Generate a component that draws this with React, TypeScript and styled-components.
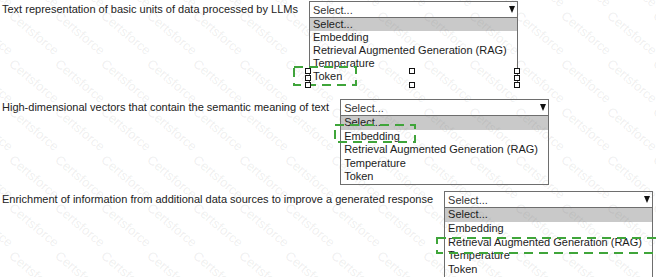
import React from 'react';
import styled, { createGlobalStyle } from 'styled-components';

const OPTIONS = [
  'Select...',
  'Embedding',
  'Retrieval Augmented Generation (RAG)',
  'Temperature',
  'Token',
];

const QUESTIONS = [
  { label: 'Text representation of basic units of data processed by LLMs', top: 1, row: 13, open: true },
  { label: 'High-dimensional vectors that contain the semantic meaning of text', top: 15, row: 13.5, open: false },
  { label: 'Enrichment of information from additional data sources to improve a generated response', top: 6.5, row: 13.75, open: false },
];

// green dashed answer marks and the leftover resize handles
const MARKS = [
  { left: 293, top: 66, width: 64, height: 20 },
  { left: 334, top: 124, width: 82, height: 19 },
  { left: 436, top: 237, width: 230, height: 17 },
];

const HANDLES = [
  [305, 68], [305, 75], [305, 82],
  [409, 68], [409, 82],
  [514, 68], [514, 75], [514, 82],
];

const GlobalStyle = createGlobalStyle`
  body {
    margin: 0;
    background: #fff;
    font-family: 'Liberation Sans', Arial, sans-serif;
  }
`;

const Page = styled.div`
  position: relative;
  width: 656px;
  height: 277px;
  overflow: hidden;
  font-size: 11px;
  color: #222;
`;

const Question = styled.div<{ $top: number }>`
  display: flex;
  align-items: flex-start;
  gap: 11px;
  padding-left: 2px;
  margin-top: ${(p) => p.$top}px;
`;

const Label = styled.div`
  line-height: 17px;
  white-space: nowrap;
`;

const Dropdown = styled.div`
  flex: none;
  width: 209px;
`;

const SelectBox = styled.div`
  box-sizing: border-box;
  height: 17px;
  display: flex;
  align-items: center;
  justify-content: space-between;
  padding: 0 2px 0 3px;
  border: 1px solid #6e6e6e;
  color: #333;
`;

const Arrow = styled.span`
  width: 0;
  height: 0;
  border-left: 3.5px solid transparent;
  border-right: 3.5px solid transparent;
  border-top: 7px solid #111;
`;

const List = styled.div<{ $open: boolean }>`
  border: 1px solid #6e6e6e;
  border-top: none;
  border-bottom-color: ${(p) => (p.$open ? 'transparent' : '#6e6e6e')};
`;

const Option = styled.div<{ $row: number; $active: boolean }>`
  height: ${(p) => p.$row}px;
  line-height: ${(p) => p.$row}px;
  padding-left: 3px;
  white-space: nowrap;
  color: #1c1c1c;
  background: ${(p) => (p.$active ? '#c9c9c9' : 'transparent')};
`;

const Mark = styled.svg`
  position: absolute;
  overflow: visible;
`;

const Handle = styled.span`
  position: absolute;
  box-sizing: border-box;
  width: 6px;
  height: 6px;
  border: 1px solid #111;
  background: #fff;
`;

const Watermark = styled.div`
  position: absolute;
  inset: 0;
  pointer-events: none;
`;

const WatermarkWord = styled.span`
  position: absolute;
  font-size: 13px;
  color: rgba(110, 110, 110, 0.11);
  transform: rotate(40deg);
  transform-origin: left top;
  white-space: nowrap;
`;

const App = () => {
  const words = [];
  for (let r = 0; r < 8; r++) {
    for (let c = 0; c < 17; c++) {
      words.push({ left: c * 46 - 30, top: r * 48 - 40 });
    }
  }

  return (
    <>
      <GlobalStyle />
      <Page>
        {QUESTIONS.map((q) => (
          <Question key={q.label} $top={q.top}>
            <Label>{q.label}</Label>
            <Dropdown>
              <SelectBox>
                <span>Select...</span>
                <Arrow />
              </SelectBox>
              <List $open={q.open}>
                {OPTIONS.map((o, i) => (
                  <Option key={o} $row={q.row} $active={i === 0}>
                    {o}
                  </Option>
                ))}
              </List>
            </Dropdown>
          </Question>
        ))}

        {MARKS.map((m, i) => (
          <Mark
            key={i}
            width={m.width}
            height={m.height}
            style={{ left: m.left, top: m.top }}
          >
            <rect
              x={1}
              y={1}
              width={m.width - 2}
              height={m.height - 2}
              fill="none"
              stroke="#3fa53a"
              strokeWidth={2}
              strokeDasharray="9 6"
            />
          </Mark>
        ))}

        {HANDLES.map(([x, y], i) => (
          <Handle key={i} style={{ left: x, top: y }} />
        ))}

        <Watermark aria-hidden="true">
          {words.map((w, i) => (
            <WatermarkWord key={i} style={{ left: w.left, top: w.top }}>
              Certsforce
            </WatermarkWord>
          ))}
        </Watermark>
      </Page>
    </>
  );
};

export default App;
